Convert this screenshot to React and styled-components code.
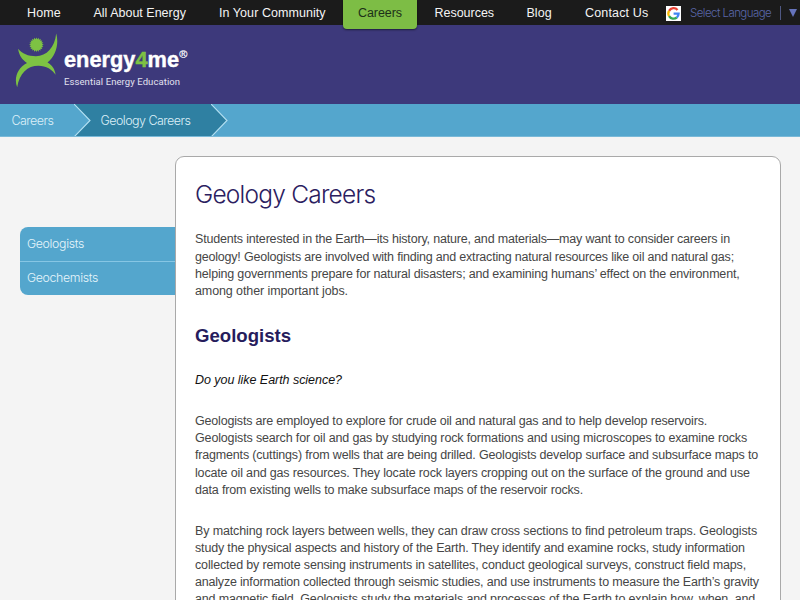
import React from 'react';
import styled, { createGlobalStyle, css } from 'styled-components';

const sans = '"Liberation Sans", Arial, sans-serif';
const light = 'Inter, "Liberation Sans", sans-serif';

const GlobalStyle = createGlobalStyle`
  * { box-sizing: border-box; }
  body { margin: 0; overflow: hidden; background: #f4f4f4; font-family: ${sans}; }
`;

const Page = styled.div`
  width: 800px;
  height: 600px;
  overflow: hidden;
  background: #f4f4f4;
`;

const TopBar = styled.nav`
  display: flex;
  align-items: flex-start;
  gap: 2.5px;
  height: 25px;
  padding-left: 12px;
  background: #1b1b1b;
`;

const NavItem = styled.a`
  flex: none;
  position: relative;
  width: ${(p) => p.$width}px;
  height: 25px;
  padding-left: 15px;
  font-size: 12.5px;
  line-height: 26px;
  letter-spacing: ${(p) => p.$track || 0}px;
  white-space: nowrap;
  color: #f4f4f4;
  ${(p) =>
    p.$active &&
    css`
      height: 29px;
      background: #7dbd45;
      color: #1c3018;
      border-radius: 0 0 4px 4px;
      box-shadow: 0 1px 2px rgba(0, 0, 0, 0.5);
    `}
`;

const Translate = styled.div`
  display: flex;
  align-items: center;
  flex: none;
  height: 26px;
  margin-left: 0.5px;
  color: #5a67a8;
  font: 300 11.5px ${light};
  letter-spacing: -0.56px;
  white-space: nowrap;
`;

const GoogleIcon = styled.svg`
  width: 15px;
  height: 15px;
  margin-right: 9px;
  background: #fff;
`;

const Separator = styled.span`
  width: 1px;
  height: 14px;
  margin: 0 8px 0 auto;
  background: #4f5883;
`;

const LanguageLabel = styled.span`
  flex: none;
  width: 99px;
  display: flex;
  align-items: center;
`;

const Caret = styled.svg`
  width: 8px;
  height: 8px;
`;

const Banner = styled.header`
  display: flex;
  height: 79px;
  padding: 7px 0 0 14px;
  background: #3d397b;
`;

const Figure = styled.svg`
  width: 46px;
  height: 58px;
`;

const Brand = styled.div`
  margin: 12px 0 0 4px;
  color: #fff;
`;

const Wordmark = styled.div`
  display: flex;
  height: 31px;
  font: 700 21.8px/31px ${sans};
  -webkit-text-stroke: 0.4px currentColor;
  white-space: pre;
`;

const Four = styled.span`
  color: #7dc243;
`;

const Registered = styled.sup`
  margin-top: 4px;
  font: 400 11px/12px ${sans};
  -webkit-text-stroke: 0.2px currentColor;
`;

const Tagline = styled.div`
  margin-top: 1px;
  font: 400 9.5px/12px Roboto, sans-serif;
  letter-spacing: 0.09px;
  color: #e2e1f0;
  white-space: nowrap;
`;

const Crumbs = styled.div`
  display: flex;
  height: 33px;
  background: #54a6cd;
  border-bottom: 1px solid #79b9d8;
`;

const Crumb = styled.a`
  flex: none;
  width: ${(p) => p.$width}px;
  height: 32px;
  padding-left: ${(p) => p.$indent}px;
  background: ${(p) => (p.$current ? '#2f80a2' : '#54a6cd')};
  color: #dceff8;
  font: 300 12.5px/33px ${light};
  letter-spacing: ${(p) => p.$track}px;
  white-space: nowrap;
`;

const Chevron = styled.svg`
  flex: none;
  width: 17px;
  height: 32px;
`;

const Body = styled.div`
  display: flex;
  align-items: flex-start;
  padding: 19px 0 0 20px;
`;

const SideMenu = styled.div`
  width: 155px;
  margin-top: 71px;
  border-radius: 8px 0 0 8px;
  overflow: hidden;
  background: #54a6cd;
`;

const SideLink = styled.a`
  display: block;
  height: 34px;
  padding-left: 7px;
  color: #e6f5fb;
  font: 300 12.3px/33px ${light};
  letter-spacing: ${(p) => p.$track}px;

  & + & {
    border-top: 1px solid #86c6e4;
    line-height: 32px;
  }
`;

const Card = styled.main`
  width: 606px;
  height: 520px;
  padding: 20px 0 0 19px;
  border: 1px solid #a9a9a9;
  border-radius: 9px;
  background: #fff;
`;

const Title = styled.h1`
  margin: 0;
  height: 34px;
  color: #2b205f;
  font: 300 24.5px/34px ${light};
  letter-spacing: -0.78px;
`;

const Subtitle = styled.h2`
  margin: 25px 0 0;
  color: #261c5c;
  font: 700 18.6px/22px ${sans};
`;

const Lead = styled.p`
  margin: 25px 0 0;
  color: #111;
  font: italic 400 12.5px/17px ${sans};
  letter-spacing: -0.04px;
`;

const Paragraph = styled.p`
  margin: ${(p) => p.$top}px 0 0;
  color: #464646;
  font: 400 12.5px/17.2px ${sans};
`;

const Line = styled.span`
  display: block;
  letter-spacing: ${(p) => p.$track}px;
  white-space: nowrap;
`;

const navItems = [
  { label: 'Home', width: 64, track: 0.15 },
  { label: 'All About Energy', width: 123, track: 0 },
  { label: 'In Your Community', width: 136.5, track: 0.06 },
  { label: 'Careers', width: 74, track: -0.07, active: true },
  { label: 'Resources', width: 89.5, track: -0.02 },
  { label: 'Blog', width: 56, track: 0.02 },
  { label: 'Contact Us', width: 93, track: 0.16 },
];

const intro = [
  ['Students interested in the Earth—its history, nature, and materials—may want to consider careers in', -0.18],
  ['geology! Geologists are involved with finding and extracting natural resources like oil and natural gas;', -0.203],
  ['helping governments prepare for natural disasters; and examining humans’ effect on the environment,', -0.178],
  ['among other important jobs.', -0.1],
];

const employment = [
  ['Geologists are employed to explore for crude oil and natural gas and to help develop reservoirs.', -0.182],
  ['Geologists search for oil and gas by studying rock formations and using microscopes to examine rocks', -0.149],
  ['fragments (cuttings) from wells that are being drilled. Geologists develop surface and subsurface maps to', -0.177],
  ['locate oil and gas resources. They locate rock layers cropping out on the surface of the ground and use', -0.157],
  ['data from existing wells to make subsurface maps of the reservoir rocks.', -0.169],
];

const methods = [
  ['By matching rock layers between wells, they can draw cross sections to find petroleum traps. Geologists', -0.135],
  ['study the physical aspects and history of the Earth. They identify and examine rocks, study information', -0.165],
  ['collected by remote sensing instruments in satellites, conduct geological surveys, construct field maps,', -0.153],
  ['analyze information collected through seismic studies, and use instruments to measure the Earth’s gravity', -0.192],
  ['and magnetic field. Geologists study the materials and processes of the Earth to explain how, when, and', -0.155],
];

const sunPoints = Array.from({ length: 40 }, (_, i) => {
  const r = i % 2 ? 5.6 : 7.3;
  const a = (i * Math.PI) / 20;
  return `${(36.4 + r * Math.cos(a)).toFixed(2)},${(44.7 + r * Math.sin(a)).toFixed(2)}`;
}).join(' ');

const Text = ({ lines, top }) => (
  <Paragraph $top={top}>
    {lines.map(([text, track]) => (
      <Line key={text} $track={track}>{text} </Line>
    ))}
  </Paragraph>
);

const CrumbArrow = ({ from, to }) => (
  <Chevron viewBox="0 0 17 32">
    <rect width="17" height="32" fill={to} />
    <path d="M0 0L16 16.5L1 32H0Z" fill={from} />
    <path d="M0 0L16 16.5L0 33" fill="none" stroke="#b5e1f3" strokeWidth="1.1" />
  </Chevron>
);

export default function App() {
  return (
    <Page>
      <GlobalStyle />
      <TopBar>
        {navItems.map((item) => (
          <NavItem key={item.label} $width={item.width} $track={item.track} $active={item.active}>
            {item.label}
          </NavItem>
        ))}
        <Translate>
          <GoogleIcon viewBox="0 0 15 15">
            <g fill="none" strokeWidth="2.3">
              <path d="M11.5 4A5.1 5.1 0 0 0 3.1 4.9" stroke="#ea4335" />
              <path d="M3.1 4.9A5.1 5.1 0 0 0 3.1 10.1" stroke="#fbbc05" />
              <path d="M3.1 10.1A5.1 5.1 0 0 0 10.8 11.5" stroke="#34a853" />
              <path d="M10.8 11.5A5.1 5.1 0 0 0 12.6 7.6H7.6" stroke="#4285f4" />
            </g>
          </GoogleIcon>
          <LanguageLabel>Select Language<Separator /></LanguageLabel>
          <Caret viewBox="0 0 8 8">
            <path d="M0 0H8L4 8Z" fill="#6573bb" />
          </Caret>
        </Translate>
      </TopBar>
      <Banner>
        <Figure viewBox="14 32 46 58">
          <g fill="#7dc243">
            <polygon points={sunPoints} />
            <path d="M56.2 33.5C59.2 44 55.8 56 47.5 62.4C52 65 55 69 55.6 74.8C52.5 69.5 46 65.8 38.5 65.7C27.5 65.7 19.5 73 17.2 87.2C13.6 78.5 17.5 67.5 27 62.9C22.3 60 19 55.5 18.1 48.8C22.2 53.8 28 56.2 36 56.2C46.5 56.2 54.8 47.5 56.2 33.5Z" />
          </g>
        </Figure>
        <Brand>
          <Wordmark>energy<Four>4</Four>me<Registered>®</Registered></Wordmark>
          <Tagline>Essential Energy Education</Tagline>
        </Brand>
      </Banner>
      <Crumbs>
        <Crumb $width={74} $indent={11.5} $track={-0.55}>Careers</Crumb>
        <CrumbArrow from="#54a6cd" to="#2f80a2" />
        <Crumb $current $width={120} $indent={9.5} $track={-0.54}>Geology Careers</Crumb>
        <CrumbArrow from="#2f80a2" to="#54a6cd" />
      </Crumbs>
      <Body>
        <SideMenu>
          <SideLink $track={-0.33}>Geologists</SideLink>
          <SideLink $track={-0.33}>Geochemists</SideLink>
        </SideMenu>
        <Card>
          <Title>Geology Careers</Title>
          <Text lines={intro} top={20.4} />
          <Subtitle>Geologists</Subtitle>
          <Lead>Do you like Earth science?</Lead>
          <Text lines={employment} top={23.7} />
          <Text lines={methods} top={23.6} />
        </Card>
      </Body>
    </Page>
  );
}
